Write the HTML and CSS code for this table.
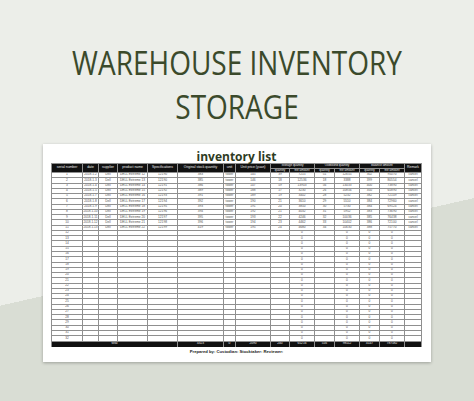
FILE: index.html
```html
<!DOCTYPE html>
<html>
<head>
<meta charset="utf-8">
<link rel="stylesheet" href="styles.css">
</head>
<body>
<h1 class="title">WAREHOUSE INVENTORY<br>STORAGE</h1>
<div class="sheet">
  <div class="sheet-title">inventory list</div>
  <div class="grid">
    <div class="h r2">serial number</div><div class="h r2">date</div><div class="h r2">supplier</div><div class="h r2">product name</div><div class="h r2">Specifications</div><div class="h r2">Original stock quantity</div><div class="h r2">unit</div><div class="h r2">Unit price (yuan)</div><div class="h c2">Storage quantity</div><div class="h c2">Outbound quantity</div><div class="h c2">balance amount</div><div class="h r2">Remark</div>
    <div class="h">quantity</div><div class="h">the amount</div><div class="h">quantity</div><div class="h">the amount</div><div class="h">quantity</div><div class="h">the amount</div>

    <div>1</div><div>2018.1.2</div><div>Dell</div><div>DELL Extreme 12</div><div>12190</div><div>383</div><div>tower</div><div>145</div><div>39</div><div>7215</div><div>51</div><div>12655</div><div>302</div><div>95070</div><div>cancel</div>
    <div>2</div><div>2018.1.3</div><div>Dell</div><div>DELL Extreme 13</div><div>12190</div><div>385</div><div>tower</div><div>146</div><div>18</div><div>12536</div><div>18</div><div>3388</div><div>399</div><div>80554</div><div>cancel</div>
    <div>3</div><div>2018.1.4</div><div>Dell</div><div>DELL Extreme 14</div><div>12191</div><div>386</div><div>tower</div><div>147</div><div>59</div><div>13903</div><div>56</div><div>13433</div><div>400</div><div>73890</div><div>cancel</div>
    <div>4</div><div>2018.1.5</div><div>Dell</div><div>DELL Extreme 15</div><div>12192</div><div>389</div><div>tower</div><div>188</div><div>17</div><div>3230</div><div>26</div><div>10856</div><div>350</div><div>65890</div><div>cancel</div>
    <div>5</div><div>2018.1.7</div><div>Dell</div><div>DELL Extreme 16</div><div>12193</div><div>391</div><div>tower</div><div>189</div><div>19</div><div>3402</div><div>28</div><div>5232</div><div>382</div><div>72109</div><div>cancel</div>
    <div>6</div><div>2018.1.8</div><div>Dell</div><div>DELL Extreme 17</div><div>12194</div><div>392</div><div>tower</div><div>190</div><div>21</div><div>3610</div><div>29</div><div>5510</div><div>384</div><div>72960</div><div>cancel</div>
    <div>7</div><div>2018.1.9</div><div>Dell</div><div>DELL Extreme 18</div><div>12195</div><div>393</div><div>tower</div><div>191</div><div>20</div><div>3850</div><div>30</div><div>5730</div><div>384</div><div>69524</div><div>cancel</div>
    <div>8</div><div>2018.1.10</div><div>Dell</div><div>DELL Extreme 19</div><div>12196</div><div>394</div><div>tower</div><div>192</div><div>21</div><div>4032</div><div>31</div><div>5952</div><div>383</div><div>73690</div><div>cancel</div>
    <div>9</div><div>2018.1.11</div><div>Dell</div><div>DELL Extreme 20</div><div>12197</div><div>395</div><div>tower</div><div>193</div><div>22</div><div>4246</div><div>32</div><div>10036</div><div>385</div><div>76438</div><div>cancel</div>
    <div>10</div><div>2018.1.12</div><div>Dell</div><div>DELL Extreme 21</div><div>12198</div><div>396</div><div>tower</div><div>194</div><div>23</div><div>4462</div><div>33</div><div>10402</div><div>386</div><div>72100</div><div>cancel</div>
    <div>11</div><div>2018.1.13</div><div>Dell</div><div>DELL Extreme 22</div><div>12199</div><div>419</div><div>tower</div><div>195</div><div>24</div><div>4680</div><div>34</div><div>10630</div><div>388</div><div>75770</div><div>cancel</div>
    <div>12</div><div></div><div></div><div></div><div></div><div></div><div></div><div></div><div></div><div>0</div><div></div><div>0</div><div>0</div><div>0</div><div></div>
    <div>13</div><div></div><div></div><div></div><div></div><div></div><div></div><div></div><div></div><div>0</div><div></div><div>0</div><div>0</div><div>0</div><div></div>
    <div>14</div><div></div><div></div><div></div><div></div><div></div><div></div><div></div><div></div><div>0</div><div></div><div>0</div><div>0</div><div>0</div><div></div>
    <div>15</div><div></div><div></div><div></div><div></div><div></div><div></div><div></div><div></div><div>0</div><div></div><div>0</div><div>0</div><div>0</div><div></div>
    <div>16</div><div></div><div></div><div></div><div></div><div></div><div></div><div></div><div></div><div>0</div><div></div><div>0</div><div>0</div><div>0</div><div></div>
    <div>17</div><div></div><div></div><div></div><div></div><div></div><div></div><div></div><div></div><div>0</div><div></div><div>0</div><div>0</div><div>0</div><div></div>
    <div>18</div><div></div><div></div><div></div><div></div><div></div><div></div><div></div><div></div><div>0</div><div></div><div>0</div><div>0</div><div>0</div><div></div>
    <div>19</div><div></div><div></div><div></div><div></div><div></div><div></div><div></div><div></div><div>0</div><div></div><div>0</div><div>0</div><div>0</div><div></div>
    <div>20</div><div></div><div></div><div></div><div></div><div></div><div></div><div></div><div></div><div>0</div><div></div><div>0</div><div>0</div><div>0</div><div></div>
    <div>21</div><div></div><div></div><div></div><div></div><div></div><div></div><div></div><div></div><div>0</div><div></div><div>0</div><div>0</div><div>0</div><div></div>
    <div>22</div><div></div><div></div><div></div><div></div><div></div><div></div><div></div><div></div><div>0</div><div></div><div>0</div><div>0</div><div>0</div><div></div>
    <div>23</div><div></div><div></div><div></div><div></div><div></div><div></div><div></div><div></div><div>0</div><div></div><div>0</div><div>0</div><div>0</div><div></div>
    <div>24</div><div></div><div></div><div></div><div></div><div></div><div></div><div></div><div></div><div>0</div><div></div><div>0</div><div>0</div><div>0</div><div></div>
    <div>25</div><div></div><div></div><div></div><div></div><div></div><div></div><div></div><div></div><div>0</div><div></div><div>0</div><div>0</div><div>0</div><div></div>
    <div>26</div><div></div><div></div><div></div><div></div><div></div><div></div><div></div><div></div><div>0</div><div></div><div>0</div><div>0</div><div>0</div><div></div>
    <div>27</div><div></div><div></div><div></div><div></div><div></div><div></div><div></div><div></div><div>0</div><div></div><div>0</div><div>0</div><div>0</div><div></div>
    <div>28</div><div></div><div></div><div></div><div></div><div></div><div></div><div></div><div></div><div>0</div><div></div><div>0</div><div>0</div><div>0</div><div></div>
    <div>29</div><div></div><div></div><div></div><div></div><div></div><div></div><div></div><div></div><div>0</div><div></div><div>0</div><div>0</div><div>0</div><div></div>
    <div>30</div><div></div><div></div><div></div><div></div><div></div><div></div><div></div><div></div><div>0</div><div></div><div>0</div><div>0</div><div>0</div><div></div>
    <div>31</div><div></div><div></div><div></div><div></div><div></div><div></div><div></div><div></div><div>0</div><div></div><div>0</div><div>0</div><div>0</div><div></div>
    <div>32</div><div></div><div></div><div></div><div></div><div></div><div></div><div></div><div></div><div>0</div><div></div><div>0</div><div>0</div><div>0</div><div></div>

    <div class="t c5">total</div><div class="t">4323</div><div class="t">0</div><div class="t">2090</div><div class="t">240</div><div class="t">65216</div><div class="t">516</div><div class="t">98112</div><div class="t">4147</div><div class="t">787582</div><div class="t"></div>
  </div>
  <div class="sign">Prepared by: Custodian: Stocktaker: Reviewer:</div>
</div>
</body>
</html>
```

FILE: styles.css
```css
html, body {
  margin: 0;
  padding: 0;
}
body {
  width: 474px;
  height: 401px;
  overflow: hidden;
  background: linear-gradient(167.2deg, #eceee9 0%, #eceee9 60.1%, #d9ddd4 60.1%, #d9ddd4 100%);
  font-family: "Open Sans", "Liberation Sans", sans-serif;
}
.title {
  margin: 0;
  padding-top: 41px;
  font-family: "Open Sans", sans-serif;
  font-weight: 400;
  font-size: 32px;
  line-height: 44px;
  color: #3b4a2b;
  text-align: center;
  transform: scaleX(0.875);
}
.sheet {
  margin: 15px 0 0 43px;
  width: 388px;
  height: 218px;
  box-sizing: border-box;
  padding: 6px 9px 0 8px;
  background: #fff;
  box-shadow: 0 1px 3px rgba(0, 0, 0, 0.28);
}
.sheet-title {
  font-family: "Open Sans", sans-serif;
  font-weight: 700;
  font-size: 12px;
  line-height: 13px;
  height: 13px;
  color: #2e3b22;
  text-align: center;
}
.grid {
  display: grid;
  grid-template-columns: 30px 15px 18px 29px 29px 45px 11px 34px 18px 24px 19px 24px 19px 24px 16px;
  grid-template-rows: 3.5px 3.5px repeat(32, 4.28px) 5.3px;
  gap: 1px;
  width: 371px;
  height: 184px;
  box-sizing: border-box;
  border: 1px solid #8f8f8f;
  background: #8f8f8f;
  font-family: "Liberation Sans", sans-serif;
  font-size: 3.2px;
  color: #555;
}
.grid > div {
  background: #fff;
  display: flex;
  align-items: center;
  justify-content: center;
  white-space: nowrap;
  overflow: hidden;
  line-height: 3.5px;
}
.grid > .h {
  background: #111;
  color: #eee;
  font-size: 3px;
}
.grid > .r2 {
  grid-row: span 2;
  font-size: 3.4px;
}
.grid > .c2 {
  grid-column: span 2;
}
.grid > .c5 {
  grid-column: span 5;
}
.grid > .t {
  background: #111;
  color: #eee;
  font-size: 3.2px;
}
.sign {
  margin-top: 2px;
  text-align: center;
  font-family: "Liberation Sans", sans-serif;
  font-weight: 700;
  font-size: 4.2px;
  line-height: 5px;
  color: #222;
}
```
